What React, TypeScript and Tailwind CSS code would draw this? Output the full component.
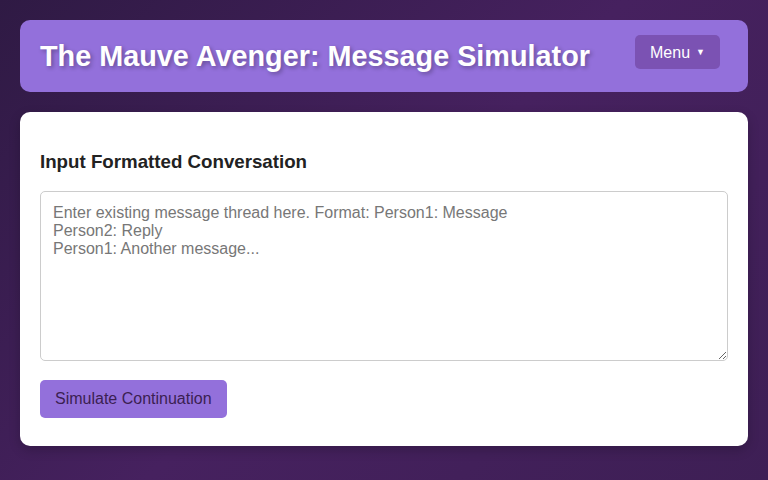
import { useState } from "react";

export default function App() {
  const [thread, setThread] = useState("");
  const [menuOpen, setMenuOpen] = useState(false);

  return (
    <div className="min-h-screen h-[480px] bg-[linear-gradient(135deg,#2f1a44_0%,#46215f_50%,#3e1f55_100%)] p-5 font-['Liberation_Sans',Arial,sans-serif]">
      <header className="bg-[#9370db] rounded-[10px] px-5 py-[15px] flex items-start justify-between">
        <h1 className="text-[28.8px] leading-[42px] font-bold text-white [text-shadow:2px_2px_4px_rgba(0,0,0,0.3)]">
          The Mauve Avenger: Message Simulator
        </h1>
        <button
          onClick={() => setMenuOpen(!menuOpen)}
          className="mr-2 h-[34px] w-[85px] pt-[2px] rounded-[5px] bg-[#7b52b3] text-white text-[16px] flex items-center justify-center gap-[6px]"
        >
          Menu <span className="text-[9px]">▼</span>
        </button>
      </header>

      <main className="mt-5 bg-white rounded-[10px] px-5 pt-5 pb-[28px] shadow-[0_4px_12px_rgba(0,0,0,0.2)]">
        <h3 className="mt-[19px] mb-[18px] text-[18.72px] leading-[22px] font-bold text-[#222]">Input Formatted Conversation</h3>
        <textarea
          value={thread}
          onChange={e => setThread(e.target.value)}
          placeholder={"Enter existing message thread here. Format: Person1: Message\nPerson2: Reply\nPerson1: Another message..."}
          className="block w-full h-[170px] border border-[#ccc] rounded-[5px] px-3 pt-[12px] pb-[10px] text-[16px] leading-[18px] text-[#333] placeholder:text-[#777] focus:outline-none"
        />
        <button className="mt-[19px] h-[38px] px-[15px] rounded-[5px] bg-[#9370db] text-[#3b1f52] text-[16px]">
          Simulate Continuation
        </button>
      </main>
    </div>
  );
}
